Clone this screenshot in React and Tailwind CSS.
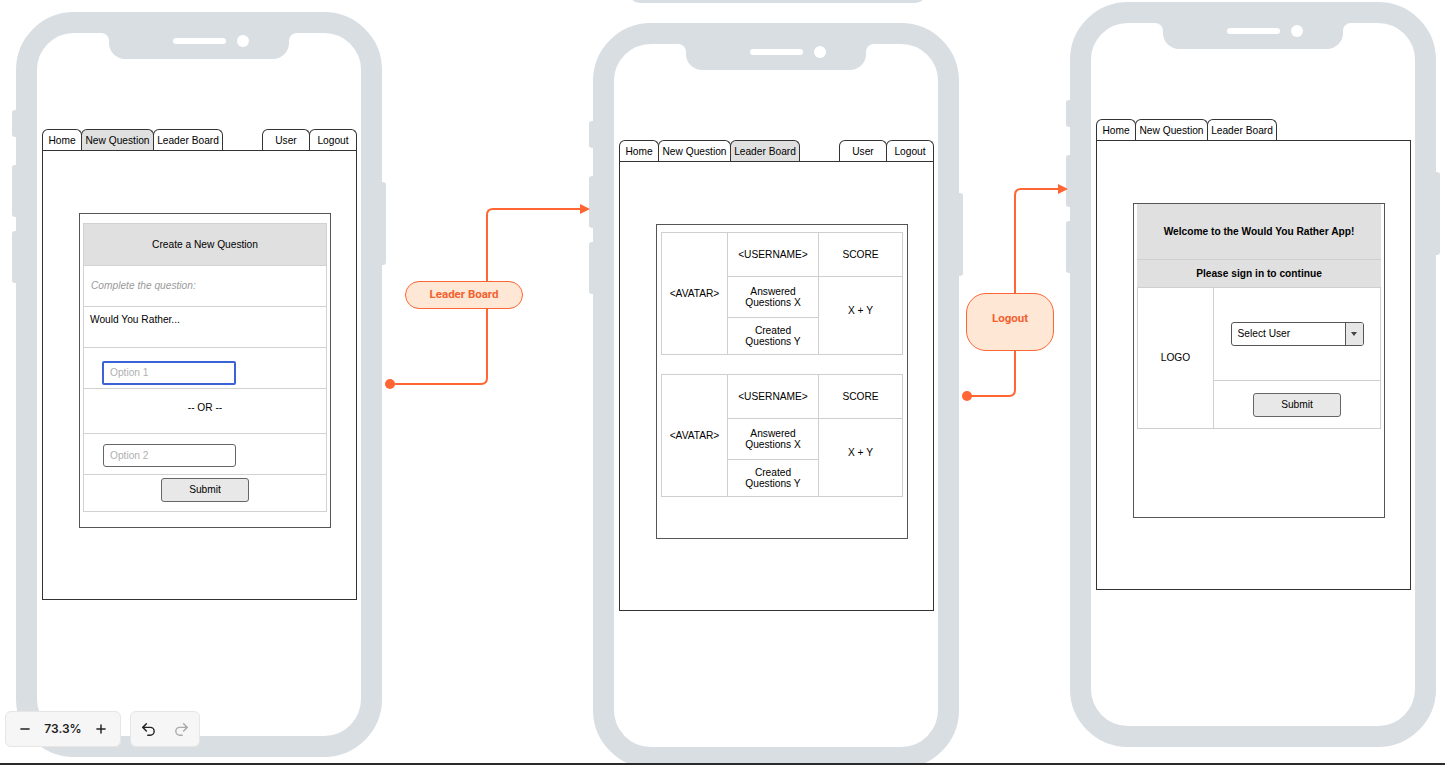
import { Minus, Plus, Undo2, Redo2 } from 'lucide-react'

function Phone({ className, children }) {
  return (
    <div className={`absolute w-[366px] h-[745px] ${className}`}>
      <div className="absolute left-[-4px] top-[98px] w-[6px] h-[27px] rounded-l-[3px] bg-[#d9dee3]" />
      <div className="absolute left-[-4px] top-[153px] w-[6px] h-[52px] rounded-l-[3px] bg-[#d9dee3]" />
      <div className="absolute left-[-4px] top-[219px] w-[6px] h-[52px] rounded-l-[3px] bg-[#d9dee3]" />
      <div className="absolute right-[-4px] top-[170px] w-[6px] h-[83px] rounded-r-[3px] bg-[#d9dee3]" />
      <div className="relative h-full rounded-[58px] border-[21px] border-[#d9dee3] bg-white">
        <div className="absolute left-1/2 top-0 -translate-x-1/2 w-[180px] h-[26px] rounded-b-[16px] bg-[#d9dee3]">
          <div className="absolute left-[-8px] top-0 w-[8px] h-[8px] bg-[#d9dee3]">
            <div className="w-full h-full rounded-tr-[8px] bg-white" />
          </div>
          <div className="absolute right-[-8px] top-0 w-[8px] h-[8px] bg-[#d9dee3]">
            <div className="w-full h-full rounded-tl-[8px] bg-white" />
          </div>
          <div className="absolute left-[64px] top-[5px] w-[53px] h-[6px] rounded-full bg-white" />
          <div className="absolute left-[128px] top-[2px] w-[12px] h-[12px] rounded-full bg-white" />
        </div>
        <div className="pt-[96px] pl-[5px]">{children}</div>
      </div>
    </div>
  )
}

function Tab({ label, width, active }) {
  return (
    <div
      className={`${width} h-[21px] -ml-px first:ml-0 border border-b-0 border-[#333] rounded-t-[6px] text-center leading-[21px] ${
        active ? 'bg-[#e0e0e0]' : 'bg-white'
      }`}
    >
      {label}
    </div>
  )
}

function TabBar({ active, user = true }) {
  return (
    <div className="flex justify-between w-[315px] text-[10.2px]">
      <div className="flex">
        <Tab label="Home" width="w-[40px]" active={active === 'Home'} />
        <Tab label="New Question" width="w-[73px]" active={active === 'New Question'} />
        <Tab label="Leader Board" width="w-[70px]" active={active === 'Leader Board'} />
      </div>
      {user ? (
        <div className="flex">
          <Tab label="User" width="w-[48px]" />
          <Tab label="Logout" width="w-[48px]" />
        </div>
      ) : null}
    </div>
  )
}

function Screen({ children }) {
  return <div className="w-[315px] h-[450px] border border-[#333] bg-white">{children}</div>
}

function Card({ className = '', children }) {
  return <div className={`mt-[62px] ml-[36px] w-[252px] h-[315px] border border-[#555] ${className}`}>{children}</div>
}

function GrayButton({ children }) {
  return (
    <div className="w-[88px] h-[24px] border border-[#666] rounded-[3px] bg-[#e8e8e8] text-center leading-[22px]">
      {children}
    </div>
  )
}

function ScoreTable() {
  const cell = 'bg-white flex items-center justify-center'
  return (
    <div className="grid grid-cols-[65px_90px_1fr] grid-rows-[43px_40px_36px] gap-px bg-[#cfcfcf] border border-[#cfcfcf] text-center leading-[11px]">
      <div className={`row-span-3 ${cell}`}>&lt;AVATAR&gt;</div>
      <div className={cell}>&lt;USERNAME&gt;</div>
      <div className={cell}>SCORE</div>
      <div className={cell}>
        Answered
        <br />
        Questions X
      </div>
      <div className={`row-span-2 pb-[10px] ${cell}`}>X + Y</div>
      <div className={cell}>
        Created
        <br />
        Questions Y
      </div>
    </div>
  )
}

export default function App() {
  return (
    <div className="relative w-[1445px] h-[765px] overflow-hidden bg-white font-['Liberation_Sans',Arial,sans-serif] text-[10.2px] text-black">
      <div className="absolute left-[628px] top-[-10px] w-[299px] h-[13px] rounded-b-[12px] bg-[#d9dee3]" />

      <Phone className="left-[16px] top-[12px]">
        <TabBar active="New Question" />
        <Screen>
          <Card className="pt-[9px] px-[3px]">
            <div className="border border-[#d2d2d2]">
              <div className="h-[41px] bg-[#e0e0e0] flex items-center justify-center">Create a New Question</div>
              <div className="h-[41px] border-t border-[#d2d2d2] flex items-center pl-[7px] italic text-[#9a9a9a]">
                Complete the question:
              </div>
              <div className="h-[41px] border-t border-[#d2d2d2] pt-[5px] pl-[6px]">Would You Rather...</div>
              <div className="h-[41px] border-t border-[#d2d2d2] pt-[13px] pl-[18px]">
                <div className="w-[134px] h-[24px] border-2 border-[#3b62d6] rounded-[2px] pl-[6px] leading-[20px] text-[#b0b0b0]">
                  Option 1
                </div>
              </div>
              <div className="h-[45px] border-t border-[#d2d2d2] pt-[11px] text-center">-- OR --</div>
              <div className="h-[41px] border-t border-[#d2d2d2] pt-[10px] pl-[19px]">
                <div className="w-[133px] h-[23px] border border-[#666] rounded-[3px] pl-[6px] leading-[21px] text-[#b0b0b0]">
                  Option 2
                </div>
              </div>
              <div className="h-[37px] border-t border-[#d2d2d2] pt-[3px] flex justify-center">
                <GrayButton>Submit</GrayButton>
              </div>
            </div>
          </Card>
        </Screen>
      </Phone>

      <Phone className="left-[593px] top-[23px]">
        <TabBar active="Leader Board" />
        <Screen>
          <Card className="pt-[7px] px-[4px]">
            <ScoreTable />
            <div className="mt-[19px]">
              <ScoreTable />
            </div>
          </Card>
        </Screen>
      </Phone>

      <Phone className="left-[1070px] top-[2px]">
        <TabBar active="" user={false} />
        <Screen>
          <Card className="px-[3px]">
            <div className="h-[55px] bg-[#e0e0e0] flex items-center justify-center font-bold">
              Welcome to the Would You Rather App!
            </div>
            <div className="h-[28px] bg-[#e0e0e0] border-t border-[#cfcfcf] flex items-center justify-center font-bold">
              Please sign in to continue
            </div>
            <div className="grid grid-cols-[75px_1fr] grid-rows-[92px_47px] gap-px bg-[#cfcfcf] border border-[#cfcfcf]">
              <div className="row-span-2 bg-white flex items-center justify-center">LOGO</div>
              <div className="bg-white flex items-center justify-center">
                <div className="flex w-[133px] h-[24px] border border-[#555] rounded-[3px] overflow-hidden">
                  <div className="flex-1 pl-[6px] leading-[22px]">Select User</div>
                  <div className="w-[18px] border-l border-[#555] bg-[#e6e6e6] flex items-center justify-center">
                    <div className="w-0 h-0 border-l-[3px] border-r-[3px] border-t-[4px] border-l-transparent border-r-transparent border-t-[#444]" />
                  </div>
                </div>
              </div>
              <div className="bg-white flex items-center justify-center">
                <GrayButton>Submit</GrayButton>
              </div>
            </div>
          </Card>
        </Screen>
      </Phone>

      <svg className="absolute left-0 top-0 pointer-events-none" width="1445" height="765" viewBox="0 0 1445 765">
        <g fill="none" stroke="#ff6633" strokeWidth="2">
          <path d="M390 384 H481 Q487 384 487 378 V215 Q487 209 493 209 H581" />
          <path d="M967 396 H1009 Q1015 396 1015 390 V195 Q1015 189 1021 189 H1059" />
        </g>
        <g fill="#ff6633">
          <circle cx="390" cy="384" r="5" />
          <polygon points="580,204 590,209 580,214" />
          <circle cx="967" cy="396" r="5" />
          <polygon points="1058,184 1068,189 1058,194" />
        </g>
      </svg>

      <div className="absolute left-[405px] top-[281px] w-[118px] h-[28px] rounded-full border-[1.5px] border-[#ff6633] bg-[#ffe7d6] flex items-center justify-center font-['Roboto',sans-serif] font-bold text-[11.5px] text-[#f2612e]">
        Leader Board
      </div>
      <div className="absolute left-[966px] top-[293px] w-[88px] h-[58px] rounded-[20px] border-[1.5px] border-[#ff6633] bg-[#ffe7d6] flex items-center justify-center pb-[6px] font-['Roboto',sans-serif] font-bold text-[11.5px] text-[#f2612e]">
        Logout
      </div>

      <div className="absolute left-[5px] top-[711px] flex gap-[9px] font-['Inter',sans-serif]">
        <div className="w-[116px] h-[36px] rounded-[6px] border border-[#e6e6e6] bg-[#f6f6f6] flex items-center justify-between px-[12px]">
          <Minus size={14} strokeWidth={2.5} className="text-[#222]" />
          <span className="text-[12px] font-semibold text-[#222]">73.3%</span>
          <Plus size={14} strokeWidth={2.5} className="text-[#222]" />
        </div>
        <div className="w-[70px] h-[36px] rounded-[6px] border border-[#e6e6e6] bg-[#f6f6f6] flex items-center justify-between px-[9px]">
          <Undo2 size={17} strokeWidth={2} className="text-[#222]" />
          <Redo2 size={17} strokeWidth={2} className="text-[#aaa]" />
        </div>
      </div>

      <div className="absolute left-0 top-[763px] w-full h-[2px] bg-[#2a2a2a]" />
    </div>
  )
}
